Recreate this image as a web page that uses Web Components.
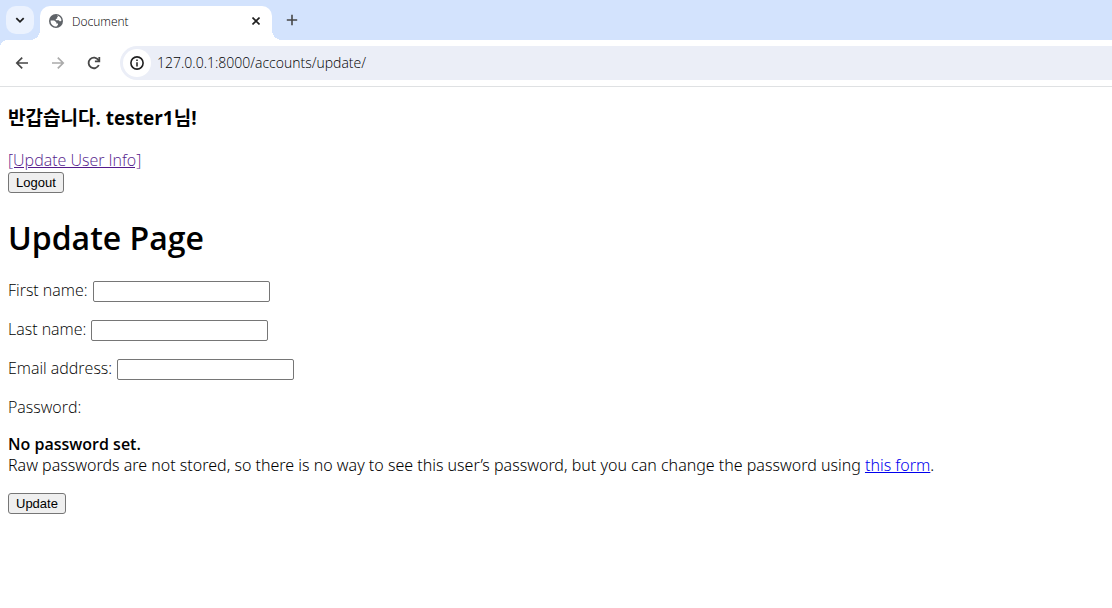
<!DOCTYPE html>
<html lang="ko">
<head>
<meta charset="utf-8">
<title>Document</title>
<style>
body { margin: 0; background: #fff; color: #000; font-family: "Open Sans", "Noto Sans CJK KR", sans-serif; font-size: 16px; line-height: 21px; }
</style>
</head>
<body>
<browser-window>
  <tab-strip slot="tabs"><browser-tab>Document</browser-tab></tab-strip>
  <address-bar slot="toolbar" url="127.0.0.1:8000/accounts/update/"></address-bar>
  <user-greeting name="tester1"></user-greeting>
  <update-form></update-form>
</browser-window>
<script>
function define(name, html) {
  customElements.define(name, class extends HTMLElement {
    constructor() {
      super();
      const t = document.createElement('template');
      t.innerHTML = html;
      this.attachShadow({ mode: 'open' }).append(t.content.cloneNode(true));
    }
    connectedCallback() {
      for (const n of this.shadowRoot.querySelectorAll('[data-text]')) n.textContent = this.getAttribute(n.dataset.text);
      for (const n of this.shadowRoot.querySelectorAll('[data-value]')) n.value = this.getAttribute(n.dataset.value);
    }
  });
}

define('browser-window', `
<style>
  :host { display: block; }
  header { border-bottom: 1px solid #dfe1e3; }
  main { display: flow-root; padding: 0 8px; }
</style>
<header><slot name="tabs"></slot><slot name="toolbar"></slot></header>
<main><slot></slot></main>`);

define('tab-strip', `
<style>
  :host { display: flex; align-items: flex-start; height: 40px; box-sizing: border-box; padding: 6px 6px 0; background: #d3e3fd; }
  button { display: grid; place-items: center; padding: 0; border: 0; width: 28px; height: 28px; border-radius: 10px; background: none; }
  .search { background: #ebf2fe; margin-right: 6px; }
  .new { margin-left: 6px; }
</style>
<button class="search" aria-label="Search tabs"><svg width="10" height="10" viewBox="0 0 10 10" fill="none" stroke="#1f1f1f" stroke-width="1.8"><path d="M1.3 3.2 5 6.8 8.7 3.2"/></svg></button>
<slot></slot>
<button class="new" aria-label="New tab"><svg width="12" height="12" viewBox="0 0 12 12" fill="none" stroke="#474747" stroke-width="1.6"><path d="M6 .8V11.2M.8 6H11.2"/></svg></button>`);

define('browser-tab', `
<style>
  :host { position: relative; display: flex; align-items: center; box-sizing: border-box; width: 232px; height: 34px; padding: 0 8px 4px; border-radius: 10px 10px 0 0; background: #fff; color: #000; font-size: 12px; font-weight: 300; line-height: 16px; }
  :host::before, :host::after { content: ""; position: absolute; bottom: 0; width: 10px; height: 10px; }
  :host::before { right: 100%; background: radial-gradient(circle at 0 0, transparent 10px, #fff 10px); }
  :host::after { left: 100%; background: radial-gradient(circle at 100% 0, transparent 10px, #fff 10px); }
  .title { flex: 1; margin: 2px 0 0 8px; }
  button { display: grid; place-items: center; width: 16px; height: 16px; padding: 0; border: 0; background: none; }
</style>
<svg width="16" height="16" viewBox="0 0 16 16"><circle cx="8" cy="8" r="7" fill="#5f6368"/><path d="M8.8 2.4C11.6 2.7 13.4 5 13.5 7.4L12 8.5 10.8 7.3H7.8V6.1L9.2 5.4V4H10.4zM2.6 7.5H6.2L8.3 9.2V10.6H10V11.8L8.6 13.5C5.2 13.8 2.4 11.2 2.6 7.5z" fill="#fff"/></svg>
<span class="title"><slot></slot></span>
<button aria-label="Close tab"><svg width="8" height="8" viewBox="0 0 8 8" stroke="#1f1f1f" stroke-width="1.6"><path d="M.5 .5 7.5 7.5M7.5 .5 .5 7.5"/></svg></button>`);

define('address-bar', `
<style>
  :host { display: flex; align-items: center; gap: 8px; height: 46px; padding-left: 8px; position: relative; background: #fff; }
  :host::before { content: ""; position: absolute; left: 0; top: 0; width: 8px; height: 8px; background: radial-gradient(circle at 100% 100%, transparent 8px, #d3e3fd 8px); }
  button { display: grid; place-items: center; width: 28px; height: 28px; padding: 0; border: 0; border-radius: 14px; background: none; }
  .box { flex: 1; display: flex; align-items: center; gap: 6px; height: 34px; margin-left: 4px; padding-left: 3px; border-radius: 17px 0 0 17px; background: #ebeef7; }
  .info { width: 28px; background: #fff; }
  input { flex: 1; min-width: 0; padding: 0; border: 0; outline: 0; background: none; color: #000; font-family: inherit; font-size: 14px; font-weight: 300; line-height: 20px; }
</style>
<button aria-label="Back"><svg width="16" height="16" viewBox="0 0 16 16" fill="none" stroke="#474747" stroke-width="1.7"><path d="M14 8H3M8.2 2.6 2.8 8 8.2 13.4"/></svg></button>
<button aria-label="Forward" disabled><svg width="16" height="16" viewBox="0 0 16 16" fill="none" stroke="#ababab" stroke-width="1.7"><path d="M2 8H13M7.8 2.6 13.2 8 7.8 13.4"/></svg></button>
<button aria-label="Reload"><svg width="16" height="16" viewBox="0 0 16 16" fill="none" stroke="#474747" stroke-width="1.8"><path d="M12.8 10A5.3 5.3 0 1 1 12.4 5.1L13.4 6.2"/><path d="M13.3 2V6.4H8.9"/></svg></button>
<div class="box">
  <button class="info" aria-label="Site information"><svg width="16" height="16" viewBox="0 0 16 16" fill="none" stroke="#1f1f1f"><circle cx="8" cy="8" r="6.1" stroke-width="1.6"/><path d="M8 7.2V11.4M8 4.6V6.1" stroke-width="1.5"/></svg></button>
  <input type="text" aria-label="Address" data-value="url" spellcheck="false">
</div>`);

define('user-greeting', `
<style>
  :host { display: block; }
  h3 { margin: 19px 0; font-size: 19px; line-height: 25px; font-weight: 700; }
  a { color: #551a8b; font-weight: 300; }
  form { margin: 1px 0 0; display: flex; }
  button { box-sizing: border-box; height: 21px; padding: 1px 7px; border: 1px solid #767676; border-radius: 3px; background: #efefef; color: #000; font: 13px/15px "Liberation Sans", Arial, sans-serif; }
</style>
<h3>반갑습니다. <span data-text="name"></span>님!</h3>
<a href="#update">[Update User Info]</a>
<form onsubmit="return false"><button type="submit">Logout</button></form>`);

define('text-field', `
<style>
  :host { display: flex; align-items: flex-start; gap: 5px; height: 23px; margin: 16px 0; font-weight: 300; }
  input { box-sizing: border-box; width: 177px; height: 21px; margin: 1px 0; padding: 1px 2px; border: 1px solid #767676; border-radius: 2px; background: #fff; font: 13px/15px "Liberation Sans", Arial, sans-serif; }
</style>
<label for="field" data-text="label"></label>
<input id="field" type="text">`);

define('update-form', `
<style>
  :host { display: block; font-weight: 300; }
  h1 { margin: 23px 0 21px; font-size: 32px; line-height: 43px; font-weight: 600; }
  p { margin: 16px 0; }
  .help { margin-bottom: 17px; font-family: "Noto Sans", sans-serif; }
  strong { font-family: "Open Sans", sans-serif; font-weight: 600; }
  a { color: #0000ee; }
  button { display: block; box-sizing: border-box; height: 21px; padding: 1px 7px; border: 1px solid #767676; border-radius: 3px; background: #efefef; color: #000; font: 13px/15px "Liberation Sans", Arial, sans-serif; }
</style>
<h1>Update Page</h1>
<form onsubmit="return false">
  <text-field label="First name:"></text-field>
  <text-field label="Last name:"></text-field>
  <text-field label="Email address:"></text-field>
  <p>Password:</p>
  <p class="help"><strong>No password set.</strong><br>Raw passwords are not stored, so there is no way to see this user’s password, but you can change the password using <a href="#password">this form</a>.</p>
  <button type="submit">Update</button>
</form>`);
</script>
</body>
</html>
